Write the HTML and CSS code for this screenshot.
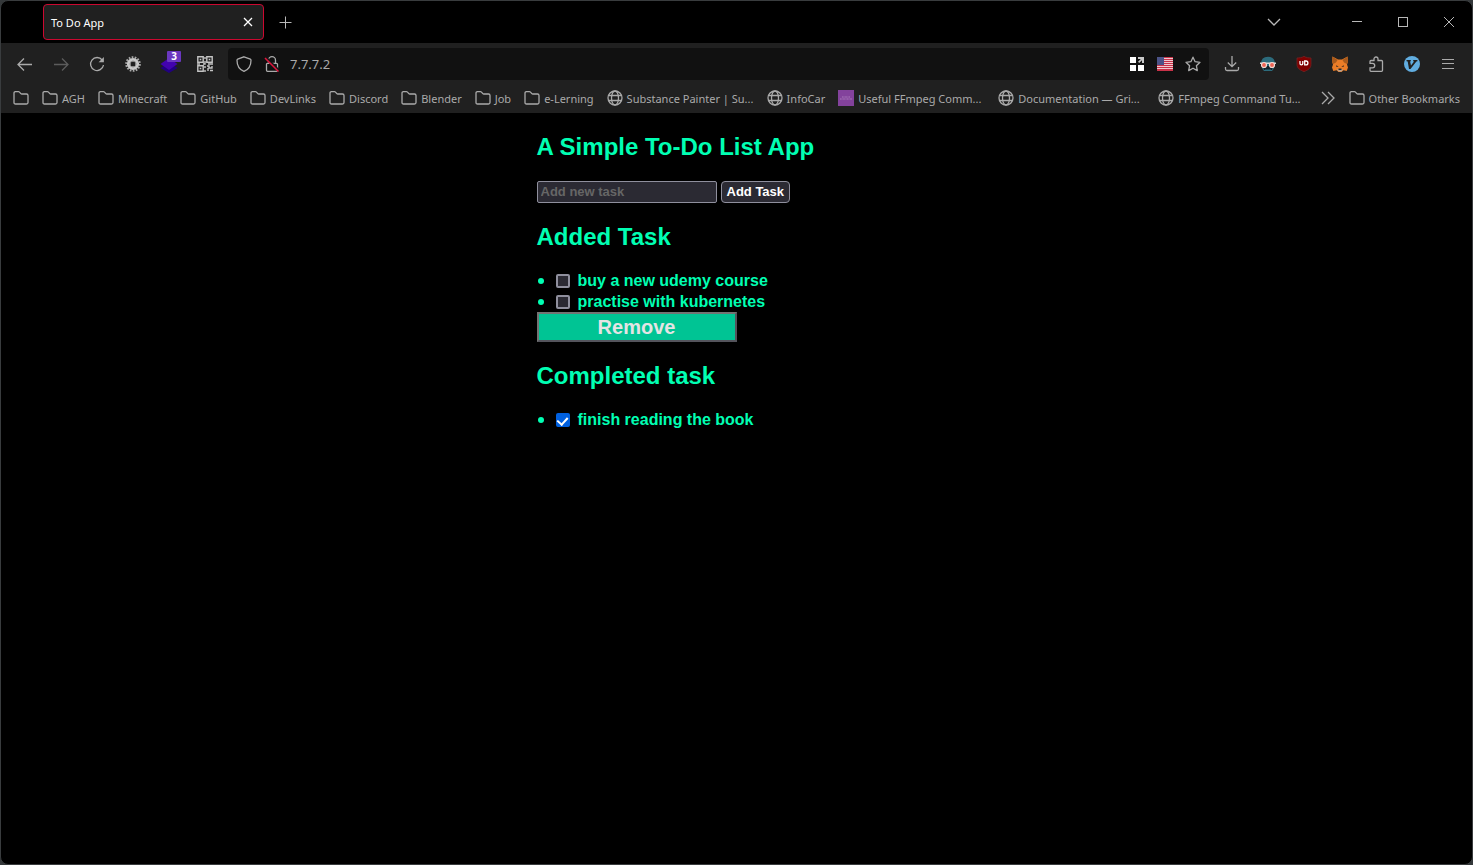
FILE: index.html
```html
<!DOCTYPE html>
<html lang="en">
<head>
<meta charset="utf-8">
<title>To Do App</title>
<link rel="stylesheet" href="styles.css">
</head>
<body>
<svg class="defs" aria-hidden="true">
  <symbol id="folder" viewBox="0 0 16 16"><path d="M2.500 1.600h2.900q.6 0 1.100.5l1.300 1.500q.4.400 1 .4h4.700q1.500 0 1.500 1.500v7q0 1.500-1.500 1.500h-11Q1 14 1 12.500V3.100q0-1.500 1.500-1.500z"/></symbol>
  <symbol id="globe" viewBox="0 0 16 16"><circle cx="8" cy="8" r="7"/><ellipse cx="8" cy="8" rx="3.500" ry="7"/><path d="M1.500 5.500h13M1.500 10.500h13"/></symbol>
</svg>
<div class="window">
  <header class="chrome">
    <div class="titlebar">
      <div class="tab"><span class="tab-title">To Do App</span>
        <button class="tab-close" aria-label="Close tab"><svg class="icon" viewBox="0 0 16 16"><path d="M4 4l8 8M12 4l-8 8"/></svg></button>
      </div>
      <button class="new-tab" aria-label="New tab"><svg class="icon thin" viewBox="0 0 16 16"><path d="M8.500 2.500v12M2.500 8.500h12"/></svg></button>
      <button class="win-btn tabs-btn" aria-label="List tabs"><svg class="icon" viewBox="0 0 16 16"><path d="M2 5l6 6 6-6"/></svg></button>
      <button class="win-btn" aria-label="Minimize"><svg class="icon crisp" viewBox="0 0 16 16"><path d="M3 7.500h10"/></svg></button>
      <button class="win-btn" aria-label="Maximize"><svg class="icon crisp" viewBox="0 0 16 16"><path d="M3.500 3.500h9v9h-9z"/></svg></button>
      <button class="win-btn" aria-label="Close window"><svg class="icon thin" viewBox="0 0 16 16"><path d="M3 3l10 10M13 3L3 13"/></svg></button>
    </div>
    <nav class="toolbar" aria-label="Navigation">
      <button class="tool" aria-label="Back"><svg class="icon" viewBox="0 0 16 16"><path d="M15 8.500H1.500M7 2.500l-6 6 6 6"/></svg></button>
      <button class="tool dim" aria-label="Forward"><svg class="icon" viewBox="0 0 16 16"><path d="M1 8.500h13.500M9 2.500l6 6-6 6"/></svg></button>
      <button class="tool" aria-label="Reload"><svg class="icon" viewBox="0 0 16 16"><path d="M13.200 4A6.500 6.500 0 1 0 14.500 9"/><path d="M14.900 1v5.300H9.600z" fill="currentColor" stroke="none"/></svg></button>
      <button class="tool" aria-label="Settings"><svg class="icon" viewBox="0 0 16 16"><circle cx="8" cy="8" r="6.800" stroke="#aaa" stroke-width="2" stroke-dasharray="1.700 1.350"/><circle cx="8" cy="8" r="4.300" stroke="#c8c8c8" stroke-width="3.600"/><circle cx="8" cy="8" r="3" stroke="#888" stroke-width=".9"/></svg></button>
      <button class="tool" aria-label="Layers, 3"><svg class="icon big" viewBox="0 0 20 20"><path d="M10 9l8.500 5-8.500 5-8.500-5z" fill="#210080" stroke="none"/><path d="M10 4l8.500 6-8.500 6-8.500-6z" fill="#4203af" stroke="none"/></svg><span class="badge">3</span></button>
      <button class="tool" aria-label="QR code"><svg class="icon" viewBox="0 0 16 16"><g stroke="#c4c4c4" stroke-width="1.400"><path d="M.8.8h5.400v5.400H.8zM9.800.8h5.400v5.400H9.800zM.8 9.800h5.400v5.400H.8z"/><path d="M8 1v2M8 5v3H6M0 8h3M11 8h5M8 10v2M8 14v2M10 10h2v2h3v-2M11 12v3M13 14.500h3"/></g><path d="M2.700 2.700h1.600v1.600H2.700zM11.700 2.700h1.600v1.600h-1.600zM2.700 11.700h1.600v1.600H2.700z" fill="#c4c4c4" stroke="none"/></svg></button>
      <div class="urlbar">
        <button class="url-btn" aria-label="Tracking protection"><svg class="icon" viewBox="0 0 16 16"><path d="M8 .8l6.300 2.300q.7.300.7 1.100C15 9.500 12.400 13.600 8 15.400 3.600 13.600 1 9.500 1 4.200q0-.8.700-1.100z"/></svg></button>
        <button class="url-btn" aria-label="Connection not secure"><svg class="icon" viewBox="0 0 16 16"><path d="M4.500 7V4.200a3.500 3.500 0 0 1 7 0V7M3.500 7.300h9q1 0 1 1v6q0 1-1 1h-9q-1 0-1-1v-6q0-1 1-1z"/><path d="M1.500 1.500l13 13" stroke="#161616" stroke-width="3"/><path d="M1 2l13.500 13.500" stroke="#e1143c" stroke-width="1.500"/></svg></button>
        <input class="address" type="text" value="7.7.7.2" aria-label="Address">
        <button class="url-btn" aria-label="Containers"><svg class="icon" viewBox="0 0 16 16"><path d="M1 1h6v6H1zM1 9h6v6H1zM9 9h6v6H9z" fill="#fff" stroke="none"/><path d="M9 1h6v6h-2V4.200L10.200 7 9 5.800 11.800 3H9z" fill="#c8c8c8" stroke="none"/></svg></button>
        <button class="url-btn" aria-label="Server location"><svg class="icon" viewBox="0 0 16 16"><g stroke="none"><path d="M0 1h16v14H0z" fill="#f0c8ce"/><path d="M0 1h16v1H0zM0 3h16v1H0zM0 5h16v1H0zM0 7h16v1H0zM0 9h16v1H0zM0 11h16v1H0zM0 13h16v2H0z" fill="#c83248"/><path d="M0 1h7v8H0z" fill="#4b5387"/></g></svg></button>
        <button class="url-btn" aria-label="Bookmark this page"><svg class="icon" viewBox="0 0 16 16"><path d="M8 1.200l2.100 4.500 4.900.6-3.600 3.400.9 4.900L8 12.200l-4.300 2.400.9-4.900L1 6.300l4.900-.6z" stroke-linejoin="round"/></svg></button>
      </div>
      <div class="tools-end">
        <button class="tool" aria-label="Downloads"><svg class="icon" viewBox="0 0 16 16"><path d="M8 0v10.500M3.800 6.500L8 10.700l4.200-4.200M1.500 11v2q0 1.500 1.500 1.500h10q1.500 0 1.500-1.500v-2"/></svg></button>
        <button class="tool" aria-label="Spy extension"><svg class="icon" viewBox="0 0 16 16"><g stroke="none"><path d="M1 8Q1 .8 8 .8T15 8l-1.500 5-1.500 2H4l-1.500-2z" fill="#2c6b7c"/><path d="M3 10h10l-1 4H4z" fill="#12222b"/><path d="M5 13.500h6V15H5z" fill="#2c6b7c"/><path d="M0 6.500h16V8H0z" fill="#d8d8d8"/></g><circle cx="4" cy="9" r="2.500" fill="#ee6354" stroke="#f0d8d0" stroke-width="1.200"/><circle cx="12" cy="9" r="2.500" fill="#ee6354" stroke="#f0d8d0" stroke-width="1.200"/></svg></button>
        <button class="tool" aria-label="uBlock Origin"><svg class="icon" viewBox="0 0 16 16"><path d="M8 .3c2 1.300 4.500 1.700 7 1.700v6.500c0 3.700-3 5.500-7 7.200-4-1.700-7-3.500-7-7.200V2C3.500 2 6 1.600 8 .3z" fill="#800000" stroke="#702424" stroke-width=".8"/><path d="M4 5v2.600q0 1.300 1.400 1.300t1.400-1.300V5" stroke="#fff" stroke-width="1.300"/><path d="M8.700 5H10q1.900 0 1.900 1.950T10 8.900H8.700z" stroke="#fff" stroke-width="1.300"/></svg></button>
        <button class="tool" aria-label="MetaMask"><svg class="icon" viewBox="0 0 16 16"><g stroke="none"><path d="M.5.5L6 3.500h4L15.500.5l.5 5-1 3 1 3-1.300 3.500-3.200-.7L9.500 16h-3l-2-1.700-3.200.7L0 11.500l1-3-1-3z" fill="#ea7d27"/><path d="M.5.5L5.500 4 4 6.500 1 8 0 5.500zM15.500.5L10.500 4 12 6.500 15 8l1-2.500z" fill="#a85a1c"/><path d="M4 9.200l2.700 1.300-2.200.5zM12 9.200l-2.700 1.300 2.200.5z" fill="#3b2b25"/><path d="M5 13.500l1.500-.5h3l1.500.5-1.500 2h-3z" fill="#b5a090"/><path d="M6.500 12.500h3V14h-3z" fill="#282828"/></g></svg></button>
        <button class="tool" aria-label="Extensions"><svg class="icon" viewBox="0 0 16 16"><path d="M2 7.300V5.500q0-1 1-1h3V3a2 2 0 0 1 4 0v1.500h3.500q1 0 1 1v8.800q0 1-1 1H3q-1 0-1-1v-2.500h2.500a2.200 2.200 0 0 0 0-4.500z"/></svg></button>
        <button class="tool" aria-label="Vimium"><svg class="icon" viewBox="0 0 16 16"><circle cx="8" cy="8" r="8" fill="#61ade0" stroke="none"/><path d="M2.500 4h4.300v1.200l-.7.300L7 9.500l3-4-.8-.3V4h4.200v1.200l-1 .4L6.500 13H5L3.700 5.500l-1.200-.3z" fill="#222" stroke="none"/></svg></button>
        <button class="tool" aria-label="Menu"><svg class="icon crisp" viewBox="0 0 16 16"><path d="M2 3.500h12M2 7.500h12M2 12.500h12"/></svg></button>
      </div>
    </nav>
    <nav class="bookmarks" aria-label="Bookmarks">
      <a href="#" class="bookmark" aria-label="Folder"><svg class="icon"><use href="#folder"/></svg></a>
      <a href="#" class="bookmark"><svg class="icon"><use href="#folder"/></svg>AGH</a>
      <a href="#" class="bookmark"><svg class="icon"><use href="#folder"/></svg>Minecraft</a>
      <a href="#" class="bookmark"><svg class="icon"><use href="#folder"/></svg>GitHub</a>
      <a href="#" class="bookmark"><svg class="icon"><use href="#folder"/></svg>DevLinks</a>
      <a href="#" class="bookmark"><svg class="icon"><use href="#folder"/></svg>Discord</a>
      <a href="#" class="bookmark"><svg class="icon"><use href="#folder"/></svg>Blender</a>
      <a href="#" class="bookmark"><svg class="icon"><use href="#folder"/></svg>Job</a>
      <a href="#" class="bookmark"><svg class="icon"><use href="#folder"/></svg>e-Lerning</a>
      <a href="#" class="bookmark site"><svg class="icon"><use href="#globe"/></svg>Substance Painter | Su...</a>
      <a href="#" class="bookmark"><svg class="icon"><use href="#globe"/></svg>InfoCar</a>
      <a href="#" class="bookmark site"><svg class="icon" viewBox="0 0 16 16"><path d="M0 0h16v16H0z" fill="#83429c" stroke="none"/><path d="M4 7h8M2 9h12" stroke="#b58bc4" stroke-width=".8" stroke-dasharray="1 .4"/></svg>Useful FFmpeg Comm...</a>
      <a href="#" class="bookmark site"><svg class="icon"><use href="#globe"/></svg>Documentation — Gri...</a>
      <a href="#" class="bookmark site"><svg class="icon"><use href="#globe"/></svg>FFmpeg Command Tu...</a>
      <button class="more" aria-label="More bookmarks"><svg class="icon" viewBox="0 0 16 16"><path d="M2 2l6 6-6 6M8 2l6 6-6 6"/></svg></button>
      <a href="#" class="bookmark"><svg class="icon"><use href="#folder"/></svg>Other Bookmarks</a>
    </nav>
  </header>
  <main class="app">
    <h2>A Simple To-Do List App</h2>
    <form class="add-form">
      <input class="new-task" type="text" placeholder="Add new task" aria-label="New task">
      <button class="add-btn" type="button">Add Task</button>
    </form>
    <h2>Added Task</h2>
    <ul class="tasks">
      <li><label><input type="checkbox">buy a new udemy course</label></li>
      <li><label><input type="checkbox">practise with kubernetes</label></li>
    </ul>
    <button class="remove-btn" type="button">Remove</button>
    <h2>Completed task</h2>
    <ul class="tasks">
      <li><label><input type="checkbox" checked>finish reading the book</label></li>
    </ul>
  </main>
</div>
</body>
</html>
```

FILE: styles.css
```css
* { box-sizing: border-box; }
body {
  margin: 0;
  background: #34383a;
  font-family: "Noto Sans", sans-serif;
  font-size: 11px;
  color: #aaa;
}
button, input { font: inherit; color: inherit; }
button { background: none; border: 0; padding: 0; }
.defs { position: absolute; width: 0; height: 0; }
.icon {
  display: block;
  flex: none;
  width: 16px;
  height: 16px;
  fill: none;
  stroke: currentColor;
  stroke-width: 1.3;
}
.crisp { shape-rendering: crispEdges; stroke-width: 1; }
.thin { stroke-width: 1; }
.window {
  min-height: 100vh;
  border: 1px solid #393c3e;
  border-radius: 8px;
  background: #000;
  overflow: hidden;
}

/* Title bar */
.titlebar { display: flex; align-items: center; height: 42px; padding-left: 42px; color: #b8b8b8; }
.tab {
  display: flex;
  align-items: center;
  justify-content: space-between;
  width: 221px;
  height: 36px;
  padding: 0 7px;
  border: 1px solid #cc0830;
  border-radius: 4px;
  background: #202020;
  color: #fff;
}
.new-tab { margin-left: 13px; }
.win-btn { display: flex; align-items: center; justify-content: center; width: 46px; height: 100%; }
.tabs-btn { margin-left: auto; margin-right: 37px; }

/* Navigation */
.toolbar { display: flex; align-items: center; height: 42px; padding: 0 6px; background: #202020; }
.tool { position: relative; display: flex; align-items: center; justify-content: center; width: 36px; height: 36px; }
.dim { color: #5c5c5c; }
.big { width: 20px; height: 20px; }
.badge {
  position: absolute;
  top: 5px;
  right: 6px;
  width: 14px;
  background: #6a37c0;
  color: #fff;
  font-size: 10px;
  font-weight: bold;
  line-height: 11px;
  border-radius: 1px;
}
.urlbar {
  display: flex;
  flex: 1;
  align-items: center;
  height: 32px;
  margin: 0 5px;
  padding: 0 2px;
  border-radius: 4px;
  background: #111;
}
.url-btn { display: flex; justify-content: center; width: 28px; }
.address { flex: 1; min-width: 0; padding: 0 4px; border: 0; background: none; font-size: 13px; }
.tools-end { display: flex; }

/* Bookmarks */
.bookmarks { display: flex; align-items: center; gap: 13px; height: 28px; padding: 0 12px 2px; background: #202020; }
.bookmark { display: flex; align-items: center; gap: 4px; color: inherit; text-decoration: none; white-space: nowrap; }
.site { width: 147px; }
.more { margin-left: auto; }

/* To-do page */
.app {
  display: flow-root;
  max-width: 400px;
  margin: 0 auto;
  font: bold 16px "Liberation Sans", Arial, sans-serif;
  color: #00ffb3;
}
h2 { margin: 20px 0 19px; font-size: 24px; line-height: 28px; }
.add-form { display: flex; align-items: flex-end; gap: 4px; height: 23px; font-size: 13px; }
.new-task {
  width: 180px;
  height: 22px;
  padding: 0 3px 2px;
  border: 1px solid #8f8f9d;
  border-radius: 2px;
  background: #2b2a33;
  color: #fff;
}
.new-task::placeholder { color: #666; opacity: 1; }
.add-btn {
  height: 22px;
  padding: 0 5px 2px;
  border: 1px solid #8f8f9d;
  border-radius: 4px;
  background: #2b2a33;
  color: #fff;
}
.tasks { margin: 0; padding: 0; list-style: none; }
.tasks li { display: flex; align-items: center; height: 21px; }
.tasks li::before { content: ""; width: 6px; height: 6px; margin: 0 12px 0 1px; border-radius: 50%; background: currentColor; }
.tasks label { display: flex; align-items: center; gap: 8px; }
.tasks input {
  appearance: none;
  display: grid;
  place-items: center;
  width: 14px;
  height: 14px;
  margin: 0;
  border: 2px solid #8f8f9d;
  border-radius: 2px;
  background: #2b2a33;
}
.tasks input:checked { border-color: #0060df; background: #0060df; }
.tasks input:checked::before {
  content: "";
  width: 5px;
  height: 8px;
  margin-bottom: 2px;
  border: solid #fff;
  border-width: 0 2px 2px 0;
  transform: rotate(42deg);
}
.remove-btn {
  display: block;
  width: 200px;
  height: 30px;
  border: 2px solid;
  border-color: #737373 #54545c #54545c #737373;
  background: #00c494;
  color: #e4e4e4;
  font-size: 20px;
  line-height: 26px;
}
```
